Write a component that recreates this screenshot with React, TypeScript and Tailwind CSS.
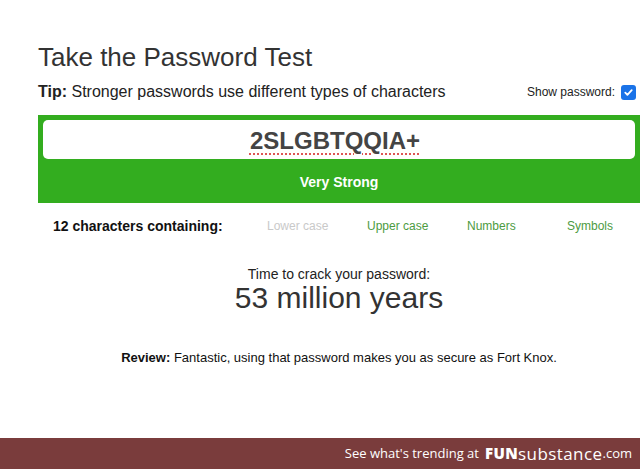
import React from 'react';

const features = [
  { label: 'Lower case', met: false },
  { label: 'Upper case', met: true },
  { label: 'Numbers', met: true },
  { label: 'Symbols', met: true },
];

export default function App() {
  return (
    <div className="w-[640px] h-[469px] bg-white flex flex-col overflow-hidden font-['Liberation_Sans',Arial,sans-serif] text-[#333]">
      <div className="flex-1 pl-[38px] pt-[41px]">
        {/* Heading */}
        <h1 className="text-[26px] leading-[32px] text-[#333]">Take the Password Test</h1>

        {/* Tip + show password */}
        <div className="mt-[9px] flex items-center justify-between pr-[4px] h-[20px]">
          <p className="text-[16px] text-[#222]">
            <span className="font-bold">Tip:</span> Stronger passwords use different types of characters
          </p>
          <label className="flex items-center gap-[6px] text-[12px] text-[#222]">
            Show password:
            <span className="w-[15px] h-[15px] rounded-[3px] bg-[#1a73e8] flex items-center justify-center">
              <svg viewBox="0 0 12 12" className="w-[11px] h-[11px]" fill="none" stroke="white" strokeWidth="2" strokeLinecap="round" strokeLinejoin="round">
                <path d="M2.5 6.2l2.3 2.3 4.7-5" />
              </svg>
            </span>
          </label>
        </div>

        {/* Strength box */}
        <div className="mt-[13px] bg-[#33ad1f] h-[88px] pt-[5px] px-[5px] flex flex-col">
          <div className="h-[39px] bg-white rounded-[5px] flex items-center justify-center pt-[2px] pr-[8px]">
            <span className="text-[24px] font-bold text-[#444] underline decoration-dotted decoration-[#d55] decoration-2 underline-offset-[5px]">
              2SLGBTQQIA+
            </span>
          </div>
          <div className="flex-1 flex items-center justify-center text-white font-bold text-[14px] pt-[2px]">
            Very Strong
          </div>
        </div>

        {/* Characters row */}
        <div className="mt-[14px] flex items-center h-[18px] text-[12px]">
          <span className="w-[229px] shrink-0 pl-[15px] font-bold text-[14px] text-[#111]">12 characters containing:</span>
          {features.map((f) => (
            <span
              key={f.label}
              className={`w-[100px] shrink-0 ${f.met ? 'text-[#4d9b3f]' : 'text-[#c9c9c9]'}`}
            >
              {f.label}
            </span>
          ))}
        </div>

        {/* Crack time */}
        <div className="mt-[31px] flex flex-col items-center">
          <span className="text-[14px] text-[#222] leading-[16px]">Time to crack your password:</span>
          <span className="text-[30px] text-[#333] leading-[32px]">53 million years</span>
        </div>

        {/* Review */}
        <div className="mt-[34px] flex justify-center text-[13px] text-[#111]">
          <p>
            <span className="font-bold">Review:</span> Fantastic, using that password makes you as secure as Fort Knox.
          </p>
        </div>
      </div>

      {/* Footer bar */}
      <div className="h-[31px] bg-[#7a3c3c] flex items-center justify-end pr-[8px] text-white font-['Open_Sans',sans-serif]">
        <span className="text-[13px]">See what's trending at</span>
        <span className="ml-[6px] text-[15px] font-extrabold tracking-wide">FUN</span>
        <span className="text-[17px] leading-none tracking-wide">substance</span>
        <span className="text-[13px]">.com</span>
      </div>
    </div>
  );
}
